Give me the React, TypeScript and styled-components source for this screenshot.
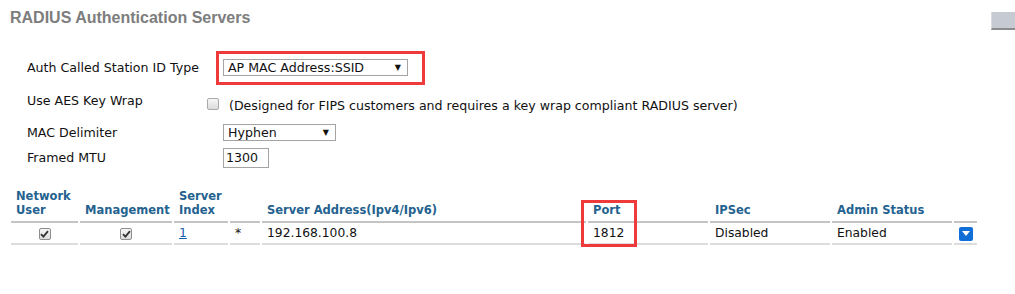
import React from "react";
import styled, { createGlobalStyle } from "styled-components";

const GlobalStyle = createGlobalStyle`
  body {
    margin: 0;
    background: #ffffff;
    font-family: "DejaVu Sans", Verdana, sans-serif;
    font-size: 12.6px;
    color: #111;
  }
`;

const Page = styled.div`
  width: 1015px;
  height: 294px;
  overflow: hidden;
`;

const Header = styled.div`
  display: flex;
  justify-content: space-between;
  align-items: flex-start;
`;

const Title = styled.h2`
  margin: 0;
  padding: 8px 0 0 10px;
  font-family: "Liberation Sans", Arial, sans-serif;
  font-size: 16px;
  line-height: 20px;
  font-weight: bold;
  color: #7d7d7d;
`;

const CornerButton = styled.div`
  margin-top: 12px;
  width: 23px;
  height: 16px;
  background: #c6cad3;
  border-bottom: 2px solid #8c8c8c;
  border-left: 1px solid #d8dbe2;
`;

const Form = styled.div`
  margin-top: 21px;
  padding-left: 27px;
`;

const Row = styled.div<{ $top: number; $align?: string }>`
  display: flex;
  align-items: ${(p) => p.$align || "center"};
  margin-top: ${(p) => p.$top}px;
`;

const Label = styled.div`
  width: 180px;
  line-height: 16px;
`;

const Highlight = styled.div`
  margin-left: 9px;
  border: 3px solid #ee3a3a;
  padding: 5px 14px 6px 4px;
`;

const SelectBox = styled.div<{ $width: number }>`
  box-sizing: border-box;
  width: ${(p) => p.$width}px;
  height: 17px;
  border: 1px solid #a4a4a4;
  background: #fff;
  display: flex;
  align-items: center;
  justify-content: space-between;
  padding: 0 6px 0 4px;
  line-height: 15px;
`;

const Arrow = styled.span`
  font-size: 8px;
  color: #111;
`;

const Indent = styled.div`
  margin-left: 16px;
`;

const TextInput = styled.div`
  box-sizing: border-box;
  width: 46px;
  height: 20px;
  border: 1px solid #a4a4a4;
  padding: 0 2px;
  line-height: 18px;
`;

const Option = styled.div`
  margin-top: 5px;
  display: flex;
  align-items: flex-start;
  gap: 10px;
  line-height: 16px;
`;

const Box = styled.span<{ $checked?: boolean }>`
  box-sizing: border-box;
  display: inline-flex;
  align-items: center;
  justify-content: center;
  width: 12px;
  height: 12px;
  border: 1px solid ${(p) => (p.$checked ? "#8e8e8e" : "#a9a9a9")};
  border-radius: 2px;
  background: linear-gradient(#f6f6f6, #dcdcdc);
  vertical-align: middle;
`;

const TableWrap = styled.div`
  position: relative;
  margin: 21px 0 0 9px;
  width: 970px;
`;

const Table = styled.table`
  border-collapse: separate;
  border-spacing: 2px 0;
  table-layout: fixed;
  width: 970px;
  font-size: 12.3px;
`;

const Th = styled.th`
  text-align: left;
  vertical-align: bottom;
  font-weight: bold;
  font-size: 11.5px;
  color: #24628f;
  line-height: 14px;
  padding: 0 5px 4px;
  border-bottom: 2px solid #c4c4c4;
`;

const Td = styled.td<{ $center?: boolean }>`
  height: 20px;
  padding: 0 5px;
  line-height: 20px;
  text-align: ${(p) => (p.$center ? "center" : "left")};
  border-bottom: 2px solid #dcdcdc;
`;

const IndexLink = styled.a`
  color: #1a5ea8;
  text-decoration: underline;
`;

const DropButton = styled.span`
  display: inline-flex;
  align-items: center;
  justify-content: center;
  width: 14px;
  height: 14px;
  border-radius: 2px;
  background: #0f6fd6;
  vertical-align: middle;
`;

const PortMark = styled.div`
  position: absolute;
  left: 572px;
  top: 11px;
  width: 56px;
  height: 47px;
  box-sizing: border-box;
  border: 3px solid #ee3a3a;
  pointer-events: none;
`;

const Check = () => (
  <Box $checked>
    <svg width="9" height="8" viewBox="0 0 9 8">
      <path d="M1 4.2 L3.4 6.6 L8 1.2" fill="none" stroke="#333" strokeWidth="1.8" />
    </svg>
  </Box>
);

const widths = [67, 92, 54, 30, 324, 120, 120, 120, 23];

export default function App() {
  return (
    <Page>
      <GlobalStyle />
      <Header>
        <Title>RADIUS Authentication Servers</Title>
        <CornerButton />
      </Header>

      <Form>
        <Row $top={0}>
          <Label>Auth Called Station ID Type</Label>
          <Highlight>
            <SelectBox $width={185}>
              <span>AP MAC Address:SSID</span>
              <Arrow>▼</Arrow>
            </SelectBox>
          </Highlight>
        </Row>
        <Row $top={8} $align="flex-start">
          <Label>Use AES Key Wrap</Label>
          <Option>
            <Box />
            <span>(Designed for FIPS customers and requires a key wrap compliant RADIUS server)</span>
          </Option>
        </Row>
        <Row $top={10}>
          <Label>MAC Delimiter</Label>
          <Indent>
            <SelectBox $width={113}>
              <span>Hyphen</span>
              <Arrow>▼</Arrow>
            </SelectBox>
          </Indent>
        </Row>
        <Row $top={7}>
          <Label>Framed MTU</Label>
          <Indent>
            <TextInput>1300</TextInput>
          </Indent>
        </Row>
      </Form>

      <TableWrap>
        <Table>
          <colgroup>
            {widths.map((w, i) => (
              <col key={i} style={{ width: w }} />
            ))}
          </colgroup>
          <thead>
            <tr>
              <Th>Network<br />User</Th>
              <Th>Management</Th>
              <Th>Server<br />Index</Th>
              <Th></Th>
              <Th>Server Address(Ipv4/Ipv6)</Th>
              <Th>Port</Th>
              <Th>IPSec</Th>
              <Th>Admin Status</Th>
              <Th></Th>
            </tr>
          </thead>
          <tbody>
            <tr>
              <Td $center><Check /></Td>
              <Td $center><Check /></Td>
              <Td><IndexLink href="#">1</IndexLink></Td>
              <Td>*</Td>
              <Td>192.168.100.8</Td>
              <Td>1812</Td>
              <Td>Disabled</Td>
              <Td>Enabled</Td>
              <Td $center>
                <DropButton>
                  <svg width="8" height="5" viewBox="0 0 8 5">
                    <path d="M0 0 H8 L4 5 Z" fill="#fff" />
                  </svg>
                </DropButton>
              </Td>
            </tr>
          </tbody>
        </Table>
        <PortMark />
      </TableWrap>
    </Page>
  );
}
